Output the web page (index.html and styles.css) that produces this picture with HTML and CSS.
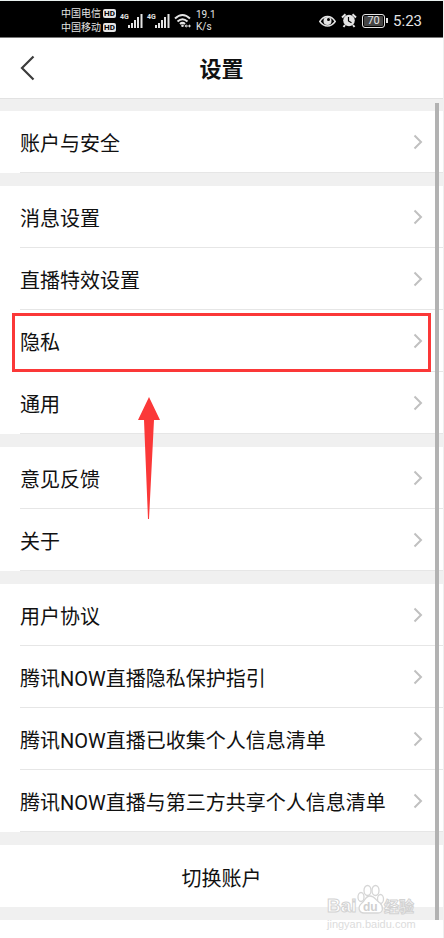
FILE: index.html
```html
<!DOCTYPE html>
<html lang="zh-CN">
<head>
<meta charset="utf-8">
<meta name="viewport" content="width=device-width, initial-scale=1">
<title>设置</title>
<link rel="stylesheet" href="styles.css">
</head>
<body>
<svg class="defs" aria-hidden="true">
  <symbol id="chevron" viewBox="0 0 10 16"><path d="M1.500 1.500 8 8l-6.500 6.500" fill="none" stroke="#c0c0c0" stroke-width="2"/></symbol>
  <symbol id="signal" viewBox="0 0 15 14"><path d="M0 11h2v3H0zM3 9h2v5H3zM6 6h2v8H6zM9 3h2v11H9zM12.500 0h2v14h-2z" fill="#e4e4e4"/></symbol>
</svg>
<div class="status">
  <div class="carriers">
    <div class="carrier"><span>中国电信</span><span class="hd">HD</span></div>
    <div class="carrier"><span>中国移动</span><span class="hd">HD</span></div>
  </div>
  <div class="network"><span class="gen">4G</span><svg width="15" height="14"><use href="#signal"/></svg></div>
  <div class="network"><span class="gen">4G</span><svg width="15" height="14"><use href="#signal"/></svg></div>
  <svg class="wifi" width="18" height="15" viewBox="0 0 18 15" fill="none" stroke="#e4e4e4" stroke-width="2"><path d="M1 5.500q7.500-7 15 0M3.500 8.500q5-4.500 10 0M6 11q2.500-2.200 5 0"/><circle cx="8.500" cy="12.700" r="1.300" fill="#e4e4e4" stroke="none"/><path d="M10.500 13l2-1.800v3.600zM17 13l-2-1.800v3.600zM12 12.500h3v1h-3z" fill="#e4e4e4" stroke="none"/></svg>
  <div class="speed"><span>19.1</span><span>K/s</span></div>
  <div class="tray">
    <svg width="17" height="12" viewBox="0 0 17 12"><path d="M.8 6.500Q4 1.500 8.500 1.500T16.200 6.500Q13 11 8.500 11T.8 6.500z" fill="none" stroke="#e4e4e4" stroke-width="1.500"/><circle cx="8.500" cy="6" r="4" fill="#e4e4e4"/><circle cx="9.500" cy="4.500" r="1.500" fill="#000"/></svg>
    <svg width="16" height="15" viewBox="0 0 16 15"><path d="M1 4.500 4.500 1.300M15 4.500 11.500 1.300M4 12l-1.500 2M12 12l1.500 2" stroke="#e4e4e4" stroke-width="2"/><circle cx="8" cy="7.500" r="5.800" fill="#e4e4e4"/><path d="M7.500 4v4l3 1.800" fill="none" stroke="#000" stroke-width="1.200"/></svg>
    <div class="battery"><span class="level">70</span></div>
    <span class="clock">5:23</span>
  </div>
</div>
<header class="bar">
  <button class="back" type="button" aria-label="返回"><svg width="15" height="26" viewBox="0 0 15 26"><path d="M13.500 1.500 2 13l11.500 11.500" fill="none" stroke="#3c3c3c" stroke-width="2.200"/></svg></button>
  <h1>设置</h1>
</header>
<main class="settings">
  <nav class="group">
    <a class="row" href="#account"><span>账户与安全</span><svg class="chev"><use href="#chevron"/></svg></a>
  </nav>
  <nav class="group">
    <a class="row" href="#message"><span>消息设置</span><svg class="chev"><use href="#chevron"/></svg></a>
    <a class="row" href="#effects"><span>直播特效设置</span><svg class="chev"><use href="#chevron"/></svg></a>
    <a class="row marked" href="#privacy"><span>隐私</span><svg class="chev"><use href="#chevron"/></svg></a>
    <a class="row" href="#general"><span>通用</span><svg class="chev"><use href="#chevron"/></svg>
      <svg class="arrow" width="22" height="122" viewBox="0 0 22 122"><path d="M11 0 22 23h-6l-5 99h-1L6 23H0z" fill="#fb3838"/></svg></a>
  </nav>
  <nav class="group">
    <a class="row" href="#feedback"><span>意见反馈</span><svg class="chev"><use href="#chevron"/></svg></a>
    <a class="row" href="#about"><span>关于</span><svg class="chev"><use href="#chevron"/></svg></a>
  </nav>
  <nav class="group">
    <a class="row" href="#terms"><span>用户协议</span><svg class="chev"><use href="#chevron"/></svg></a>
    <a class="row" href="#guide"><span>腾讯NOW直播隐私保护指引</span><svg class="chev"><use href="#chevron"/></svg></a>
    <a class="row" href="#collected"><span>腾讯NOW直播已收集个人信息清单</span><svg class="chev"><use href="#chevron"/></svg></a>
    <a class="row" href="#shared"><span>腾讯NOW直播与第三方共享个人信息清单</span><svg class="chev"><use href="#chevron"/></svg></a>
  </nav>
  <div class="group">
    <button class="switch" type="button">切换账户</button>
  </div>
  <div class="thumb"></div>
  <div class="watermark" aria-hidden="true">
    <svg width="94" height="34" viewBox="0 0 94 34">
      <g class="wm-text" fill="#fff" stroke="#d2d2d2">
        <text x="0" y="28" font-size="19">Bai</text>
        <text x="57" y="28" font-size="15">经验</text>
      </g>
      <g fill="#fff" stroke="#d6d6d6" stroke-width="1.300">
        <ellipse cx="34" cy="13" rx="3" ry="4.500"/><ellipse cx="40.500" cy="6.500" rx="3.500" ry="5"/><ellipse cx="48.500" cy="6.500" rx="3.500" ry="5"/><ellipse cx="53.500" cy="15" rx="3" ry="4.500"/>
        <path d="M43 12c-5 0-5 5-8 7-5 4-3 10 2 10h14c5 0 6-6 2-10-4-2-5-7-10-7z"/>
      </g>
      <text class="wm-du" x="36" y="27" font-size="12" fill="#d0d0d0">du</text>
    </svg>
    <span class="wm-url">jingyan.baidu.com</span>
  </div>
</main>
</body>
</html>
```

FILE: styles.css
```css
* { box-sizing: border-box; }

body {
  margin: 0;
  min-height: 100vh;
  background: #fff;
  border-top: 1px solid #e9f1ef;
  border-right: 1px solid #efefef;
  color: #111;
  font-family: Roboto, "Noto Sans CJK SC", sans-serif;
  font-size: 20px;
}

.defs { display: none; }

.status {
  display: flex;
  align-items: center;
  gap: 4px;
  height: 37px;
  padding: 3px 21px 0 61px;
  background: #000;
  border-bottom: 1px solid #777;
  color: #e4e4e4;
}

.carrier {
  display: flex;
  align-items: center;
  gap: 2px;
  height: 14px;
  font-size: 10px;
  line-height: 14px;
  white-space: nowrap;
}

.hd {
  width: 13px;
  height: 9px;
  border-radius: 2px;
  background: #e4e4e4;
  color: #000;
  font-size: 8px;
  font-weight: 700;
  line-height: 9px;
  text-align: center;
}

.network { display: flex; align-items: flex-start; }

.gen { width: 8px; font-size: 7px; font-weight: 700; line-height: 7px; }

.speed {
  display: flex;
  flex-direction: column;
  font-size: 10px;
  line-height: 12px;
}

.tray {
  display: flex;
  align-items: center;
  gap: 5px;
  margin-left: auto;
}

.battery {
  display: flex;
  align-items: center;
}

.battery::after {
  width: 2px;
  height: 5px;
  margin-left: 1px;
  background: #e4e4e4;
  content: "";
}

.level {
  width: 23px;
  height: 14px;
  border: 1px solid #e4e4e4;
  border-radius: 3px;
  box-shadow: inset 0 0 0 1px #000;
  background: #444;
  font-size: 11px;
  line-height: 12px;
  text-align: center;
}

.clock { font-size: 15px; line-height: 18px; }

.bar {
  display: grid;
  grid-template-columns: 60px 1fr 60px;
  align-items: center;
  height: 61px;
  border-bottom: 1px solid #e2e2e2;
}

.back {
  display: flex;
  padding: 0 0 0 20px;
  border: 0;
  background: none;
}

h1 {
  margin: 0;
  padding-top: 3px;
  font-size: 22px;
  font-weight: 700;
  line-height: 32px;
  text-align: center;
}

.settings {
  position: relative;
  display: flex;
  flex-direction: column;
  gap: 13px;
  padding: 12px 0 13px;
  background: #f0f0f0;
}

.group { background: #fff; }

.row {
  position: relative;
  display: flex;
  align-items: center;
  justify-content: space-between;
  height: 62px;
  padding: 0 20px;
  color: inherit;
  line-height: 30px;
  text-decoration: none;
  white-space: nowrap;
}

.row span { padding-top: 3px; }

.row::before {
  position: absolute;
  right: 0;
  bottom: 0;
  left: 20px;
  height: 1px;
  background: #e6e6e6;
  content: "";
}

.chev { flex: none; width: 10px; height: 16px; }

.marked::after {
  position: absolute;
  inset: 3px 12px 0;
  border: 3px solid #fb3838;
  content: "";
}

.arrow {
  position: absolute;
  z-index: 1;
  top: 25px;
  left: 138px;
}

.switch {
  display: block;
  width: 100%;
  height: 62px;
  padding: 2px 0 0;
  border: 0;
  background: none;
  color: inherit;
  font: inherit;
  text-align: center;
}

.thumb {
  position: absolute;
  z-index: 2;
  top: 4px;
  right: 4px;
  bottom: 0;
  width: 4px;
  background: #b2b2b2;
}

.watermark {
  position: absolute;
  right: 22px;
  bottom: -10px;
  display: flex;
  flex-direction: column;
  width: 94px;
}

.wm-text {
  font-family: "Liberation Sans", "Noto Sans CJK SC", sans-serif;
  font-weight: 700;
}

.wm-du { font-family: "Liberation Sans", sans-serif; font-weight: 700; }

.wm-url {
  color: #dcdcdc;
  font-family: "Liberation Sans", sans-serif;
  font-size: 11px;
  line-height: 12px;
}
```
